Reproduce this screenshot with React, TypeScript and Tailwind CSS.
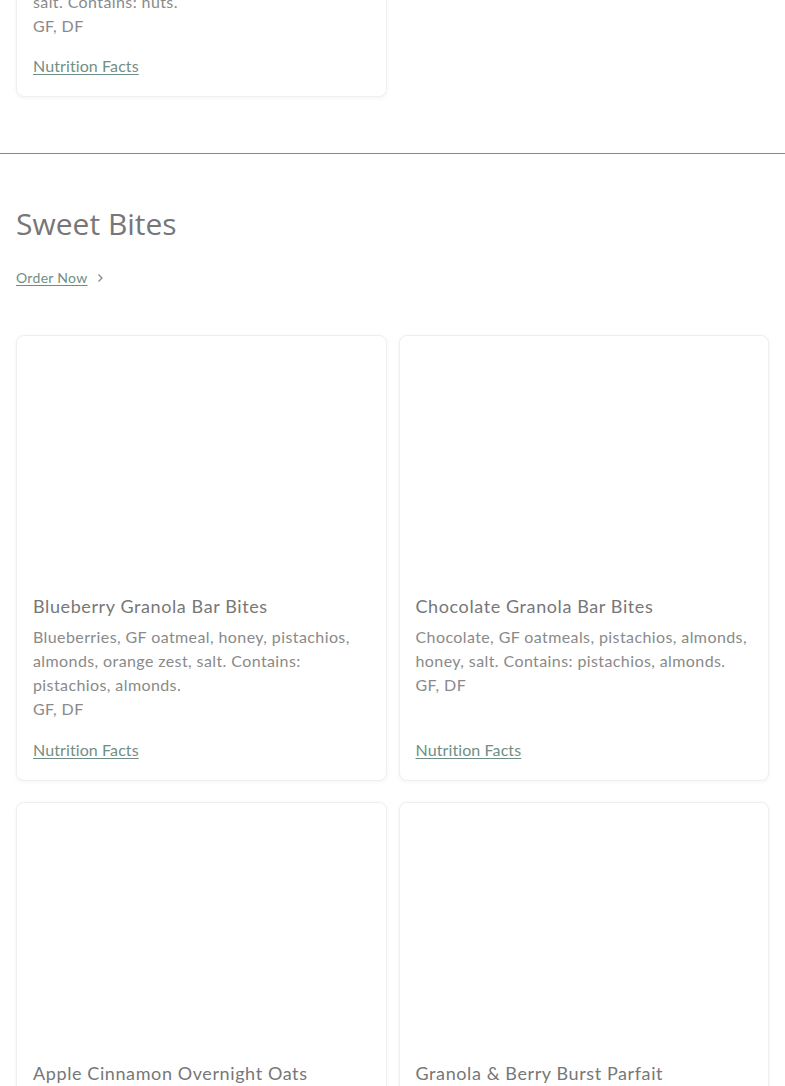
import React from "react";

type Item = { title: string; desc: string; tags: string };

const items: Item[] = [
  {
    title: "Blueberry Granola Bar Bites",
    desc: "Blueberries, GF oatmeal, honey, pistachios, almonds, orange zest, salt. Contains: pistachios, almonds.",
    tags: "GF, DF",
  },
  {
    title: "Chocolate Granola Bar Bites",
    desc: "Chocolate, GF oatmeals, pistachios, almonds, honey, salt. Contains: pistachios, almonds.",
    tags: "GF, DF",
  },
  {
    title: "Apple Cinnamon Overnight Oats",
    desc: "GF oats, apple, cinnamon, almond milk, maple syrup, salt. Contains: nuts.",
    tags: "GF, DF",
  },
  {
    title: "Granola & Berry Burst Parfait",
    desc: "Granola, mixed berries, coconut yogurt, honey, salt. Contains: nuts.",
    tags: "GF, DF",
  },
];

function Card({ item }: { item: Item }) {
  return (
    <div className="flex flex-col rounded-lg border border-[#efefef] bg-white shadow-[0_1px_4px_rgba(0,0,0,0.05)]">
      <div className="h-[242px] rounded-t-lg bg-white" />
      <div className="flex flex-1 flex-col px-4 pt-4 pb-[18px]">
        <h3 className="text-[18px] leading-[24px] tracking-[0.6px] text-[#777]">{item.title}</h3>
        <p className="mt-[7px] text-[16px] leading-[24px] tracking-[0.4px] text-[#8a8a8a]">{item.desc}</p>
        <p className="text-[16px] leading-[24px] tracking-[0.4px] text-[#8a8a8a]">{item.tags}</p>
        <a href="#" className="mt-auto self-start pt-[17px] text-[16px] leading-[24px] tracking-[0.1px] text-[#6f8f86] underline underline-offset-2 decoration-1">
          Nutrition Facts
        </a>
      </div>
    </div>
  );
}

export default function App() {
  return (
    <div className="min-h-screen bg-white font-['Lato',sans-serif] overflow-hidden">
      <div className="grid grid-cols-2 gap-3 px-4">
        <div className="mt-[-10px] flex flex-col rounded-b-lg border border-t-0 border-[#efefef] bg-white px-4 pb-[18px] shadow-[0_1px_4px_rgba(0,0,0,0.05)]">
          <p className="text-[16px] leading-[24px] tracking-[0.4px] text-[#8a8a8a]">salt. Contains: nuts.</p>
          <p className="text-[16px] leading-[24px] tracking-[0.4px] text-[#8a8a8a]">GF, DF</p>
          <a href="#" className="self-start pt-[16px] text-[16px] leading-[24px] tracking-[0.1px] text-[#6f8f86] underline underline-offset-2 decoration-1">
            Nutrition Facts
          </a>
        </div>
        <div />
      </div>

      <div className="mt-[56px] h-px w-full bg-[#8a8a8a]" />

      <section className="px-4">
        <h2 className="mt-[50px] font-['Open_Sans',sans-serif] text-[30px] leading-[40px] text-[#777]">
          Sweet Bites
        </h2>
        <a href="#" className="mt-[24px] flex w-fit items-center gap-[7px] text-[14px] leading-[20px] tracking-[0.3px] text-[#6f8f86]">
          <span className="underline underline-offset-2 decoration-1">Order Now</span>
          <svg width="10" height="10" viewBox="0 0 10 10" fill="none" stroke="#8a8a8a" strokeWidth="1.3">
            <path d="M3.5 1.5 L7 5 L3.5 8.5" />
          </svg>
        </a>
      </section>

      <div className="mt-[47px] grid grid-cols-2 gap-x-3 gap-y-[21px] px-4 pb-10">
        {items.map((it) => (
          <Card key={it.title} item={it} />
        ))}
      </div>
    </div>
  );
}
